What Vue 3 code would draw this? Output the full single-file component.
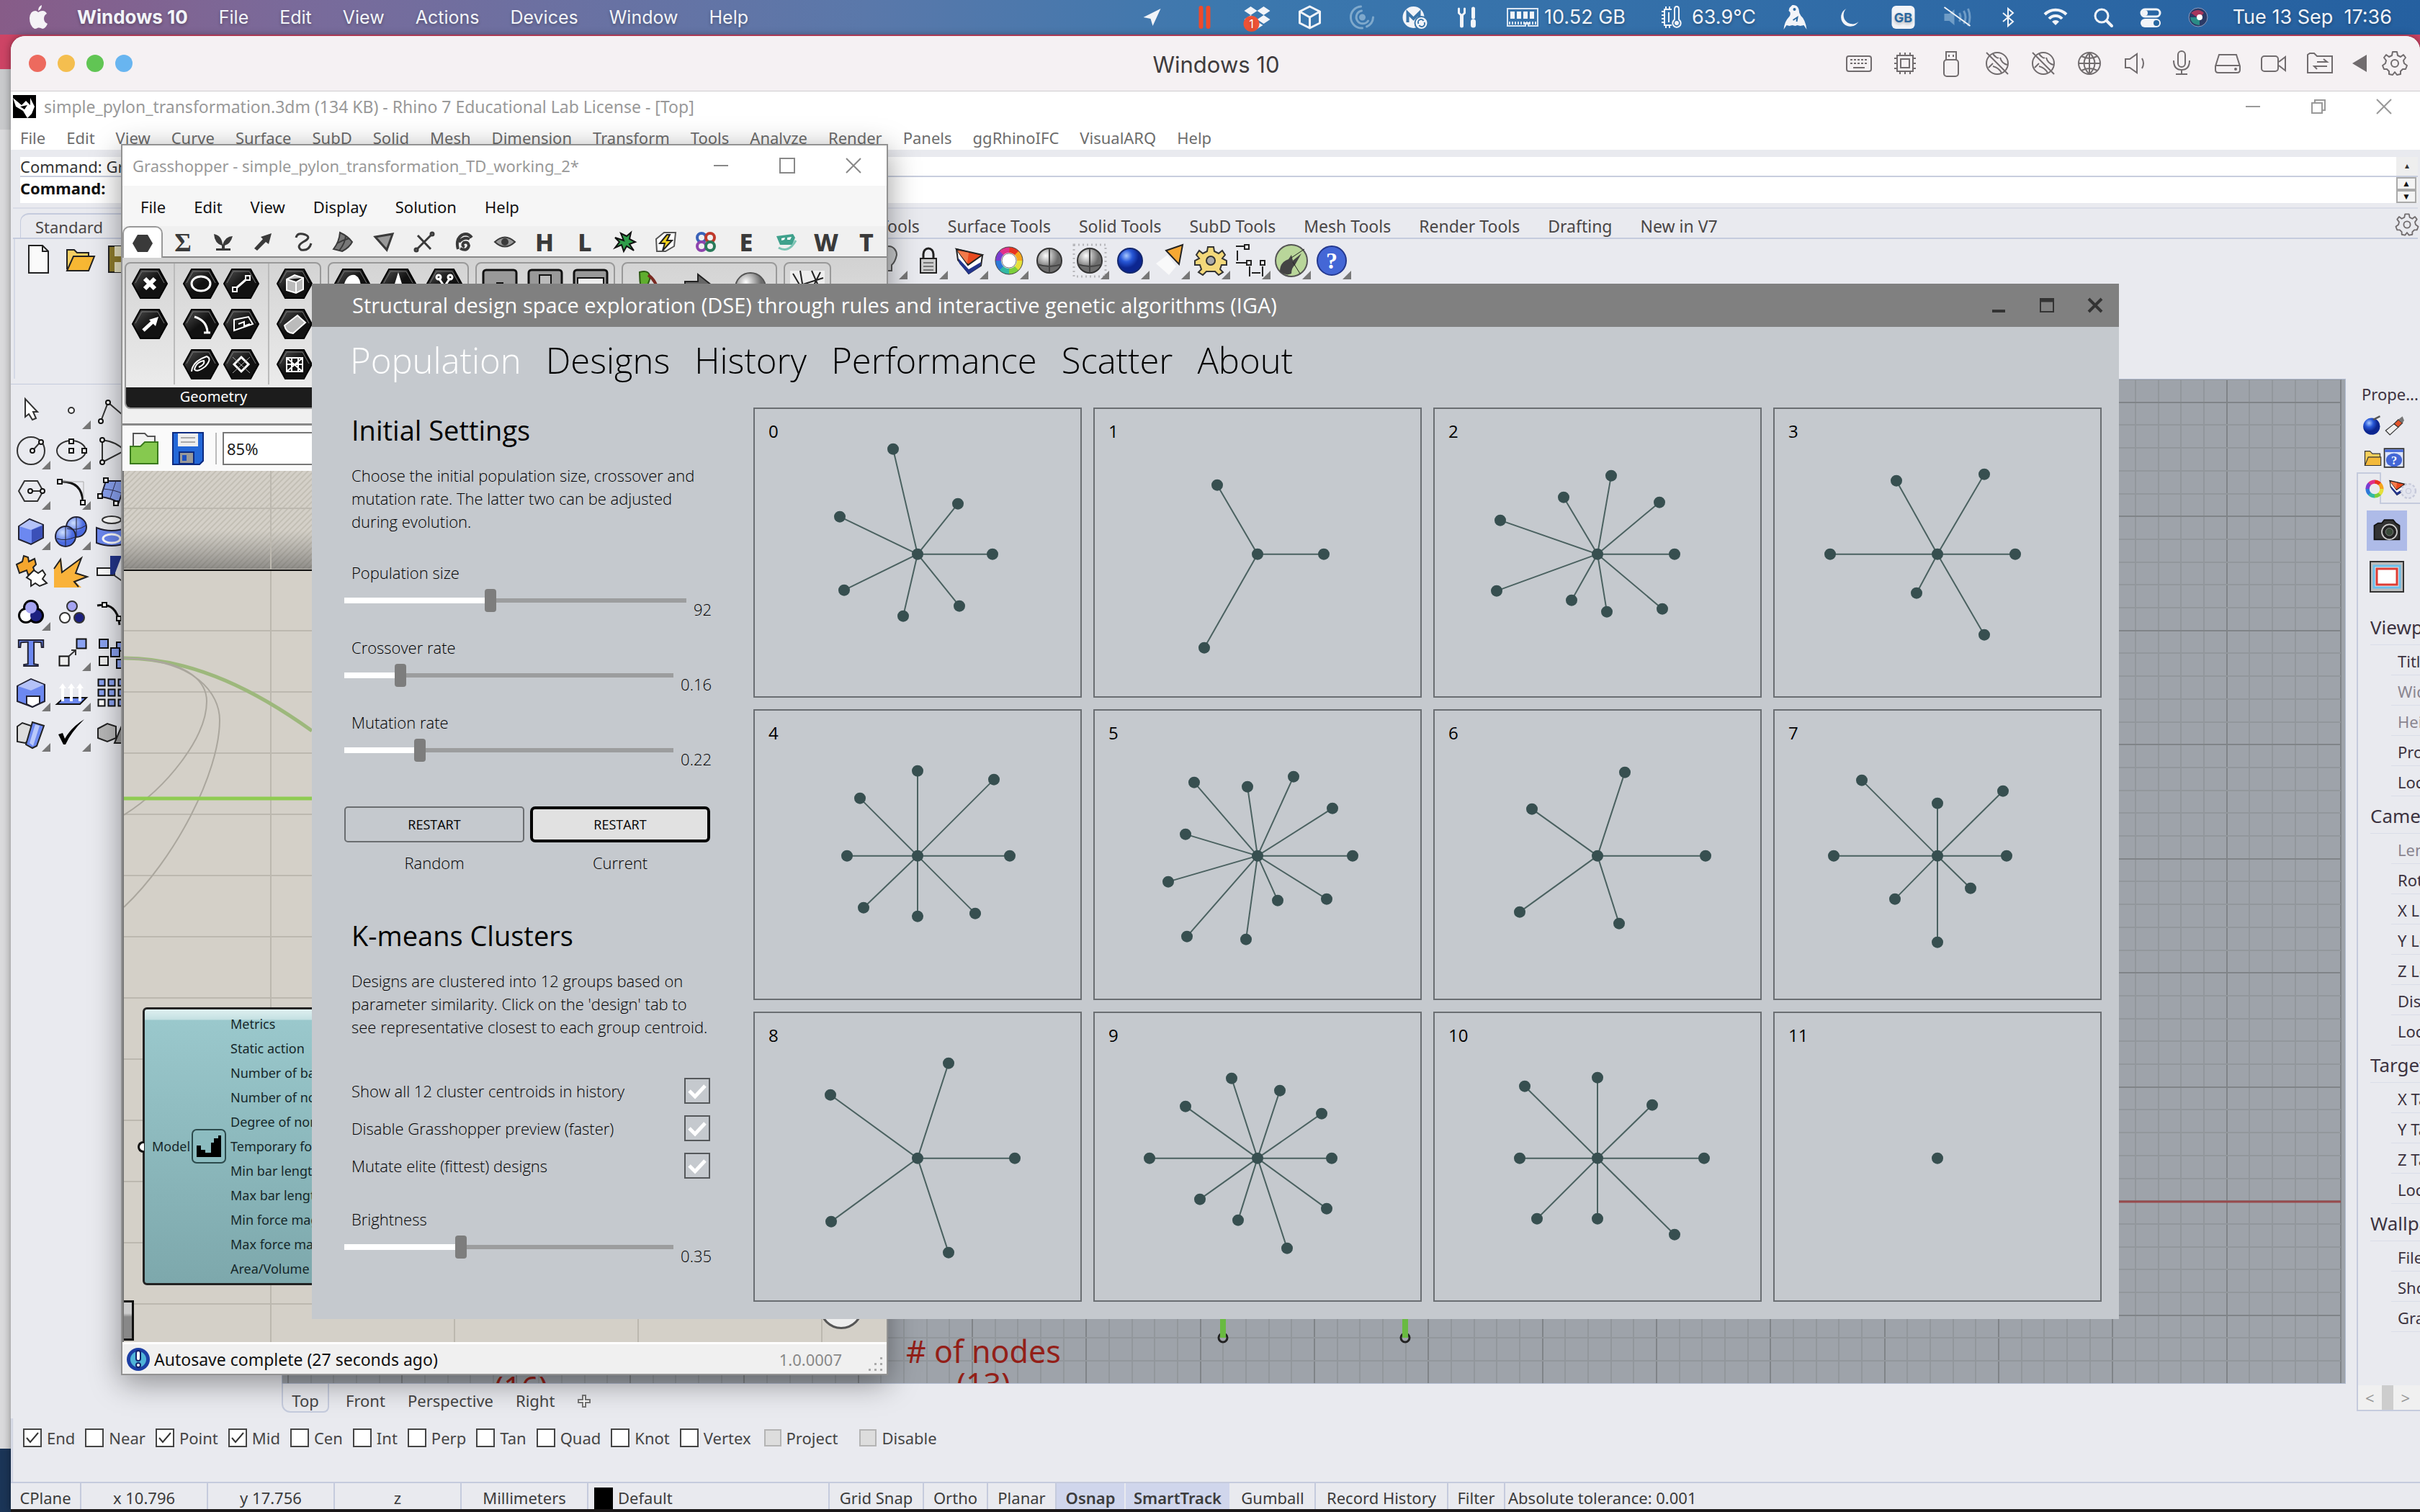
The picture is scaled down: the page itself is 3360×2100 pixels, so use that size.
<script setup>
import { ref } from 'vue'

const macMenus = ['File', 'Edit', 'View', 'Actions', 'Devices', 'Window', 'Help']
const W = '#f2f4f8'
const trayLeft = [
  `<path fill="${W}" d="M12-12L1 12L-2 2L-12 0Z"/>`,
  `<path stroke="#f04a2a" stroke-width="6" stroke-linecap="round" d="M-5-13V13M5-13V13"/>`,
  `<path fill="${W}" d="M-9-15L0-9L-9-3L-18-9ZM9-15L18-9L9-3L0-9ZM-9-3L0 3L-9 9L-18 3ZM9-3L18 3L9 9L0 3ZM0 6L8 11L0 16Z"/><circle cx="-8" cy="9" r="11" fill="#ee5236"/><text x="-8" y="15" text-anchor="middle" font-size="16" font-family="Inter,sans-serif" fill="#fff">1</text>`,
  `<path fill="none" stroke="${W}" stroke-width="3" stroke-linejoin="round" d="M0-15L14-8V8L0 15L-14 8V-8ZM-14-8L0 0L14-8M0 0V15"/>`,
  `<g fill="none" stroke="#7fa9cc" stroke-width="3" stroke-linecap="round"><path d="M-2-15A15 15 0 1 0 0 15"/><path d="M-1-9A9 9 0 1 0 8 5"/><path d="M15 0A15 15 0 0 1 6 13"/><circle r="3" fill="#7fa9cc"/></g>`,
  `<circle cx="-2" cy="0" r="15" fill="${W}"/><path fill="none" stroke="#3a74a8" stroke-width="4" d="M-10 7V-6L-2 2L6-6V4"/><circle cx="9" cy="8" r="9" fill="${W}" stroke="#3a74a8" stroke-width="2"/><path fill="none" stroke="#3a74a8" stroke-width="2" d="M5 9a4 4 0 0 1 7-4M13 7a4 4 0 0 1-7 4"/>`,
  `<g fill="none" stroke="${W}" stroke-width="5" stroke-linecap="round"><path d="M-8-2V12M8-12V0"/><path stroke-width="7" d="M8 6V11"/><path stroke-width="3" d="M-12-12V-6L-8-2L-4-6V-12"/></g>`
]
const trayA = [
  `<path fill="${W}" d="M-4-17Q3-18 5-11Q5-6 8-2Q14 3 16 17L12 11L7 12L3 11L0 12L-4 11L-8 12L-12 11L-16 17Q-15 6-9 0Q-6-3-7-7L-9-9L-8-13Z"/><circle cx="-1" cy="-11" r="2" fill="#2b6aa2"/><path stroke="#2b6aa2" stroke-width="2" fill="none" d="M-3 4L3 0L2 6M-4 14V16M4 14V16"/>`,
  `<path fill="${W}" d="M-4-12A13 13 0 1 0 13 6A12 12 0 0 1-4-12Z"/>`,
  `<rect x="-16" y="-16" width="32" height="32" rx="6" fill="${W}"/><text y="7" text-anchor="middle" font-size="18" font-weight="700" font-family="Inter,sans-serif" fill="#2b68a0">GB</text>`,
  `<g fill="#6f9cc6"><path d="M-18-5H-11L-4-11V11L-11 5H-18Z"/><path fill="none" stroke="#6f9cc6" stroke-width="3" d="M3-6Q6 0 3 6M9-9Q14 0 9 9M15-12Q20 0 15 12"/></g><path stroke="${W}" stroke-width="2" d="M-18-14L18 12"/>`
]
const trayB = [
  `<path fill="none" stroke="${W}" stroke-width="2" d="M-7-6L7 6L0 12V-12L7-6L-7 6"/>`,
  `<g fill="none" stroke="${W}" stroke-width="4"><path d="M-15-4A21 21 0 0 1 15-4"/><path d="M-9 2A12 12 0 0 1 9 2"/></g><path fill="${W}" d="M-5 6A7 7 0 0 1 5 6L0 11Z"/>`,
  `<circle cx="-2" cy="-2" r="9" fill="none" stroke="${W}" stroke-width="3"/><path stroke="${W}" stroke-width="4" stroke-linecap="round" d="M5 5L12 12"/>`,
  `<rect x="-13" y="-11" width="26" height="10" rx="5" fill="none" stroke="${W}" stroke-width="3"/><circle cx="-8" cy="-6" r="4" fill="${W}"/><rect x="-14" y="2" width="28" height="12" rx="6" fill="${W}"/><circle cx="8" cy="8" r="4" fill="#2766a0"/>`,
  `<circle r="13" fill="#2a3a66" stroke="#8d9cc0" stroke-width="1"/><path fill="#a8375c" d="M-10-6Q0-14 8-6L1 2Z"/><path fill="#2a8c86" d="M-11 0Q-10 10 2 11L2 0Z"/><circle cx="2" cy="0" r="4" fill="#fff"/>`
]
const G = 'fill="none" stroke="#716c6e" stroke-width="2"'
const vmIcons = [
  `<g ${G}><rect x="-17" y="-10" width="34" height="21" rx="3"/><path stroke-dasharray="3 2" d="M-12-5H13M-12 0H13"/><path d="M-8 6H8"/></g>`,
  `<g ${G}><rect x="-11" y="-11" width="22" height="22"/><rect x="-6" y="-6" width="12" height="12"/><path d="M-7-15V-11M0-15V-11M7-15V-11M-7 15V11M0 15V11M7 15V11M-15-7H-11M-15 0H-11M-15 7H-11M15-7H11M15 0H11M15 7H11"/></g>`,
  `<g ${G}><rect x="-10" y="-5" width="20" height="23" rx="4"/><path d="M-7-5V-16H7V-5M-3-12V-9M3-12V-9"/></g>`,
  `<g ${G}><circle r="15"/><path d="M-15-15L15 15M-6-13Q0-6 2-8M6 13Q2 6-6 4M14 2Q6 0 4-8M-12 6L-6 0"/></g>`,
  `<g ${G}><circle r="15"/><path d="M-15-15L15 15M-6-13Q0-6 2-8M6 13Q2 6-6 4M14 2Q6 0 4-8M-12 6L-6 0"/></g>`,
  `<g ${G}><circle r="15"/><path d="M0-15V15M-15 0H15M-11-10Q0-4 11-10M-11 10Q0 4 11 10M0-15Q-15 0 0 15M0-15Q15 0 0 15"/></g>`,
  `<g ${G}><path d="M-14-6H-8L2-13V13L-8 6H-14ZM9-7Q13 0 9 7"/></g>`,
  `<g ${G}><rect x="-5" y="-17" width="10" height="22" rx="5"/><path d="M-11-4Q-11 9 0 9T11-4M0 9V15M-8 15H8"/></g>`,
  `<g ${G}><path d="M-12-12H12L17 4V9Q17 13 13 13H-13Q-17 13-17 9V4ZM-17 3H17"/><circle cx="11" cy="8" r="1"/></g>`,
  `<g ${G}><rect x="-17" y="-10" width="23" height="21" rx="4"/><path d="M7-2L16-9V10L7 3"/></g>`,
  `<g ${G}><path d="M-17-12L-14-14H-8L-4-10H17V13H-17ZM-4-2H10L5-6M10 4H-8L-4 8"/></g>`
]
const gear = `<path fill="none" stroke="#716c6e" stroke-width="2" stroke-linejoin="round" d="M-3-16H3L4-11L8-9L12-12L15-8L12-4L13 0L17 3L15 8L11 8L8 11V15L3 16L0 12L-3 16L-8 15V11L-11 8L-15 8L-17 3L-13 0L-12-4L-15-8L-12-12L-8-9L-4-11Z"/><circle r="5" fill="none" stroke="#716c6e" stroke-width="2"/>`

const rhinoMenus = ['File', 'Edit', 'View', 'Curve', 'Surface', 'SubD', 'Solid', 'Mesh', 'Dimension', 'Transform', 'Tools', 'Analyze', 'Render', 'Panels', 'ggRhinoIFC', 'VisualARQ', 'Help']
const toolTabs = ['Curve Tools', 'Surface Tools', 'Solid Tools', 'SubD Tools', 'Mesh Tools', 'Render Tools', 'Drafting', 'New in V7']

const fileIcons = [
  `<path fill="#fafafa" stroke="#222" stroke-width="2" d="M-13-19H6L14-11V19H-13Z"/><path fill="none" stroke="#222" stroke-width="2" d="M6-19V-11H14"/>`,
  `<path fill="#f6cf63" stroke="#222" stroke-width="2" d="M-18 14V-13H-8L-4-9H12V-3"/><path fill="#f7b733" stroke="#222" stroke-width="2" d="M-18 16L-9-4H20L12 16Z"/>`,
  `<path fill="#8f7d2c" stroke="#222" stroke-width="2" d="M-18-18H18V18H-18Z"/><path fill="#e9e4c4" d="M-10-18H10V-4H-10ZM-10 4H12V18H-10Z"/>`
]
const ring = (r, w) => ['#e8331f', '#f4a51c', '#e5e03a', '#7ccf3c', '#32b8a4', '#2c78d8', '#7a3cd0', '#e0308a'].map((c, i) => {
  const a = (i * 45 - 90) * Math.PI / 180, b = (i * 45 - 43) * Math.PI / 180
  return `<path fill="none" stroke="${c}" stroke-width="${w}" d="M${(r * Math.cos(a)).toFixed(1)} ${(r * Math.sin(a)).toFixed(1)}A${r} ${r} 0 0 1 ${(r * Math.cos(b)).toFixed(1)} ${(r * Math.sin(b)).toFixed(1)}"/>`
}).join('')
const sphere = `<circle r="17" fill="url(#gSphere)" stroke="#333" stroke-width="2"/><path fill="none" stroke="#444" stroke-width="2" d="M0-17V17M-17 5Q0 11 17 5"/>`
const toolIcons = [
  `<path fill="#c9cacc" stroke="#555" stroke-width="2" d="M-10-8A11 12 0 0 1 12-8Q10 2 5 6V14H-4V6Z"/>`,
  `<path fill="none" stroke="#222" stroke-width="3" d="M-7-2V-9A7 8 0 0 1 7-9V-2"/><rect x="-11" y="-3" width="22" height="20" fill="#ccc" stroke="#222" stroke-width="2"/><path stroke="#777" stroke-width="2" d="M-7 3H7M-7 8H7M-7 13H7"/>`,
  `<path fill="#fff" stroke="#222" stroke-width="2" d="M-17-16L-15-1L0 18L17 7L19-7Z"/><path fill="#23358c" d="M-15-4L0 12L17 2L16 8L0 19L-13 4Z"/><path fill="#e8491f" stroke="#222" stroke-width="2" d="M-17-16L19-8L-1 6Z"/><path fill="#f27a4a" d="M-16-14L0-11L-2 4Z"/>`,
  `${ring(15, 8)}<circle r="19" fill="none" stroke="#444" stroke-width="1"/><circle r="10" fill="#fff" stroke="#777" stroke-width="1"/>`,
  sphere,
  `<rect x="-22" y="-22" width="44" height="44" fill="none" stroke="#b8b8bc" stroke-width="3" stroke-dasharray="2 4"/>${sphere}`,
  `<circle r="17" fill="url(#gBlue)" stroke="#14286e" stroke-width="2"/>`,
  `<path fill="#f6a834" stroke="#222" stroke-width="2" d="M-6-14L17-22L12 5Z"/><path fill="#fff" opacity="0.7" d="M-20 4L-4-8L8 8L-2 20Z"/>`,
  `<g fill="#f3d87a" stroke="#333" stroke-width="2"><path d="M-4-19H4L5-13L11-10L16-14L20-8L16-3L22 0V6L15 6L13 12L17 16L11 20L6 15H-6L-11 20L-17 16L-13 12L-15 6H-22V0L-16-3L-20-8L-16-14L-11-10L-5-13Z"/><circle r="6" fill="#aaa"/></g>`,
  `<g fill="none" stroke="#222" stroke-width="2"><path d="M-21-20H-10M-19-14V0M-21 3H-7M-2 8V22M16 8V22M1 17H13"/><path fill="#fff" d="M-9-22H-3V-16H-9ZM-6 0H0V6H-6ZM13 0H19V6H13Z"/></g>`,
  `<circle r="22" fill="#b9d69a" stroke="#555" stroke-width="2"/><path fill="#444" d="M-16 15Q-16 2-4-2L0-8L2 0L14-10L5 6Q0 10 0 18Q-8 22-16 15Z"/><path stroke="#222" fill="none" d="M0-4L18-16M2 2L12 18"/>`,
  `<circle r="20" fill="#4467d6" stroke="#24388e" stroke-width="2"/><text y="11" text-anchor="middle" font-family="Liberation Serif,serif" font-size="32" font-weight="700" fill="#fff">?</text>`
]
const B = '#6c88f0'
const sq = (x, y, c = '#fff', s = 6) => `<rect x="${x - s / 2}" y="${y - s / 2}" width="${s}" height="${s}" fill="${c}" stroke="#111" stroke-width="2"/>`
const S1 = 'fill="none" stroke="#333" stroke-width="2"'
const palette = [
  { c: 0, g: `<path fill="#fff" stroke="#333" stroke-width="2" d="M-8-16V9L-3 5L2 13L7 11L3 2H9Z"/>` },
  { c: 1, g: `<circle r="4" fill="#fff" stroke="#333" stroke-width="2"/>` },
  { c: 0, g: `<path ${S1} d="M-15 15L-5-11L15 6"/><circle cx="-15" cy="15" r="3" fill="#fff" stroke="#111" stroke-width="2"/><circle cx="-5" cy="-11" r="3" fill="#fff" stroke="#111" stroke-width="2"/>` },
  { c: 1, g: `<circle r="19" ${S1}/><path ${S1} d="M2 0L13-12"/><circle cx="2" cy="0" r="3" fill="#fff" stroke="#111" stroke-width="2"/><circle cx="14" cy="-12" r="3" fill="#fff" stroke="#111" stroke-width="2"/>` },
  { c: 1, g: `<ellipse rx="20" ry="14" ${S1}/>${sq(0, -13)}${sq(0, 0)}${sq(18, 0)}` },
  { c: 0, g: `<path ${S1} d="M-13-15Q8-12 18 0L-13 16Z"/><circle cx="-13" cy="-15" r="3" fill="#fff" stroke="#111" stroke-width="2"/><circle cx="-13" cy="16" r="3" fill="#fff" stroke="#111" stroke-width="2"/>` },
  { c: 1, g: `<path ${S1} d="M-17 0L-9-14H9L17 0L9 14H-9Z"/><path ${S1} d="M-1 0H15"/><circle cx="-1" r="3" fill="#fff" stroke="#111" stroke-width="2"/><circle cx="16" r="3" fill="#fff" stroke="#111" stroke-width="2"/>` },
  { c: 1, g: `<path fill="none" stroke="#111" stroke-width="3" d="M-15-13Q15-14 16 15"/><path stroke="#aaa" fill="none" d="M-12-13H17V12"/>${sq(-16, -13)}${sq(16, 16)}` },
  { c: 0, g: `<path fill="#8aa2f2" stroke="#223" stroke-width="2" d="M-8-14H20L10 16Q0 10-15 8Z"/><path stroke="#335" fill="none" d="M-12-3Q4-2 16 4M6-14L-2 10"/>${sq(-8, -15)}${sq(-16, 7)}${sq(6, 17)}` },
  { c: 1, g: `<path fill="${B}" stroke="#223" stroke-width="2" d="M-17-7L-2 -17L17-9V9L0 18L-17 11Z"/><path fill="#b4c2f8" d="M-16-7L-2-16L16-9L0-2Z"/><path fill="#3b50b8" d="M1-2L16-8V8L1 16Z"/>` },
  { c: 1, g: `<circle cx="7" cy="-6" r="14" fill="url(#gLight)" stroke="#223" stroke-width="2"/><circle cx="-8" cy="7" r="14" fill="url(#gLight)" stroke="#223" stroke-width="2"/><path fill="none" stroke="#223" d="M-20 10Q-8 14 5 8M-8-7V20M7-20V7M-6-4Q8 0 20-8"/>` },
  { c: 0, g: `<ellipse cy="-16" rx="13" ry="5" fill="#fff" stroke="#333" stroke-width="2"/><path fill="${B}" stroke="#223" stroke-width="2" d="M-21-5Q0 3 21-5V16Q0 24-21 16Z"/><ellipse cy="10" rx="12" ry="6" fill="${B}" stroke="#fff" stroke-width="3"/>` },
  { c: 0, g: `<path fill="#f5a62e" stroke="#222" stroke-width="2" d="M-20-10L-12-14L-10-22L-4-20L-3-14L5-18L7-10L3-6L6 2L-4 4L-6-2L-16 2L-18-4Z"/><path fill="#fff" stroke="#222" stroke-width="2" d="M-2 4L4-2L10 2L16-2L20 4L16 10L22 16L12 20L6 16L0 20L0 12L-6 8Z"/>` },
  { c: 0, g: `<path fill="#f9b23a" d="M-24 22V-4L-14-18L-12 0L14-20L6 2L22 6L6 14L14 22Z"/><path fill="none" stroke="#222" stroke-width="2" d="M-24-4L-15-17L-13 1L14-19L6 2L22 7L4 14L10 21"/>` },
  { c: 0, g: `<path fill="#fff" stroke="#222" stroke-width="2" d="M-20-5H4V5H-20Z"/><path fill="#23358c" d="M-2-22H14L4 4H-2Z"/><path ${S1} d="M2 4L16 14"/>` },
  { c: 1, g: `<g stroke="#000" stroke-width="6"><circle cx="0" cy="-6" r="8"/><circle cx="-7" cy="5" r="8"/><circle cx="7" cy="5" r="8"/></g><circle cx="-7" cy="5" r="8" fill="#fff"/><circle cx="7" cy="5" r="8" fill="#1c2080"/><circle cx="0" cy="-6" r="8" fill="#a5a4f2"/>` },
  { c: 0, g: `<g stroke="#333" stroke-width="2"><circle cx="1" cy="-8" r="7" fill="#a5a4f2"/><circle cx="-9" cy="8" r="7" fill="#fff"/><circle cx="11" cy="8" r="7" fill="#1c2080"/></g>` },
  { c: 0, g: `<path fill="none" stroke="#111" stroke-width="3" d="M-20-9Q8-14 11 18"/>${sq(-10, -10)}${sq(10, 9)}` },
  { c: 0, g: `<text y="19" text-anchor="middle" font-family="Liberation Serif,serif" font-weight="700" font-size="54" fill="${B}" stroke="#223" stroke-width="2">T</text>` },
  { c: 1, g: `${sq(-10, 12, '#eee', 13)}${sq(14, -12, '#8aa2f2', 13)}<path ${S1} d="M-4 6L6-3M0-3H6V4"/>` },
  { c: 0, g: `${sq(-11, -12, '#8aa2f2', 12)}${sq(-11, 12, '#eee', 12)}${sq(13, -8, '#8aa2f2', 12)}${sq(5, 0, '#8aa2f2', 12)}${sq(13, 16, '#8aa2f2', 12)}` },
  { c: 1, g: `<path fill="${B}" stroke="#223" stroke-width="2" d="M-19-9L0-19L19-11V12L2 20L-19 12Z"/><path fill="#b4c2f8" d="M-18-9L0-18L18-11L0-3Z"/><path fill="#fff" stroke="#223" stroke-width="2" d="M-6 5H12V15L2 20L-6 16Z"/>` },
  { c: 1, g: `<path fill="${B}" stroke="#111" stroke-width="2" d="M-20 16L-10 7H21L12 16Z"/><path fill="none" stroke="#fff" stroke-width="4" d="M-12 12V-8M0 12V-8M12 12V-8"/><path fill="#fff" d="M-17-6L-12-13L-7-6ZM-5-6L0-13L5-6ZM7-6L12-13L17-6Z"/>` },
  { c: 0, g: [-14, 0, 14].map(y => [-14, 0, 14].map(x => sq(x, y, x === -14 && y === 14 ? '#fff' : '#8aa2f2', 9)).join('')).join('') },
  { c: 1, g: `<path fill="#ddd" stroke="#222" stroke-width="2" d="M-19-9L-12-14L0-10V8L-8 14L-19 12Z"/><path fill="${B}" stroke="#222" stroke-width="2" d="M-7 16L2-15L18-10L8 18L2 21Z"/><path fill="#b9c8fa" d="M-2 14L6-12L12-10L3 18Z"/>` },
  { c: 1, g: `<path fill="#000" d="M-18 2L-12 0L-9 8Q0-8 18-19Q0-2-8 16H-11Z"/>` },
  { c: 0, g: `<path fill="#b8b8b8" stroke="#222" stroke-width="2" d="M-19-6L-6-13L6-9V7L-6 12L-19 7Z"/><path fill="#999" stroke="#222" stroke-width="2" d="M4 14L14-10L24 14Z"/>` }
]

const ghMenus = ['File', 'Edit', 'View', 'Display', 'Solution', 'Help']
const K = '#3a3a3a'
const ltr = (t, s = 34, f = 'Noto Sans') => `<text y="13" text-anchor="middle" font-family="${f},sans-serif" font-weight="800" font-size="${s}" fill="${K}">${t}</text>`
const ghTabs = [
  `<path fill="${K}" d="M-7-12H7L14 0L7 12H-7L-14 0Z"/>`,
  ltr('Σ', 36, 'Liberation Serif'),
  `<path fill="${K}" d="M-13-11Q-2-9-1 4Q3-8 13-8Q10 3 2 5V9H10V12H-10V9H-2V5Q-12 2-13-11Z"/>`,
  `<path fill="${K}" d="M12-12L8 3L4 0L-8 12L-12 9L0-4L-3-7Z"/>`,
  `<path fill="none" stroke="${K}" stroke-width="3" d="M-10-6Q-8-14 3-10Q12-6 0 0Q-10 6-3 11Q8 13 11 2"/>`,
  `<path fill="#777" stroke="${K}" stroke-width="2" d="M-5-13Q6-8 12 0Q8 8-2 13L-14 10Q-6 0-5-13ZM-9 2Q0-3 8-5M3-8Q2 2-6 12"/>`,
  `<path fill="#999" stroke="${K}" stroke-width="3" d="M-12-7L12-11L4 11Z"/>`,
  `<g fill="#fff" stroke="${K}" stroke-width="3"><path d="M-11 11L11-11M-9-9L9 10"/><circle cx="11" cy="-11" r="2"/><circle cx="-11" cy="11" r="2"/></g>`,
  `<path fill="none" stroke="${K}" stroke-width="4" d="M-9 10Q-13-4-3-10Q5-13 10-6M-8 0Q0-8 7-4M-6 9Q4 14 6 5Q5-1-1 1Q-5 5 0 7"/>`,
  `<path fill="#999" stroke="${K}" stroke-width="2" d="M-14 0Q0-13 14 0Q0 13-14 0Z"/><circle r="5" fill="${K}"/>`,
  ltr('H'), ltr('L'),
  `<path fill="#2f9e4a" stroke="#111" stroke-width="2" d="M-2-2L-6-12L2-8L8-13L6-4L14 0L6 3L12 12L2 6L-2 13L-5 4L-14 8L-8 0L-14-6Z"/>`,
  `<path fill="#fff" stroke="#555" stroke-width="2" d="M-13-4L-2-13H14L12 6L0 13H-12Z"/><path fill="#f6d21c" stroke="#222" stroke-width="2" d="M2-10L-8 2H-1L-4 12L9-2H2L6-10Z"/>`,
  `<g fill="none" stroke-width="4"><circle cx="-6" cy="-6" r="6" stroke="#3a62b8"/><circle cx="6" cy="-6" r="6" stroke="#c0392b"/><circle cx="-6" cy="6" r="6" stroke="#8e44ad"/><circle cx="6" cy="6" r="6" stroke="#2a7a5a"/></g>`,
  ltr('E'),
  `<path fill="#3fa18c" d="M-13-8L10-11L13-6L9 4H-8Z"/><path fill="#fff" d="M-6-5L-1-6L-2-3L-6-2ZM2-6L8-7L6-3L2-3Z"/><path fill="none" stroke="#7cc4b4" stroke-width="3" d="M-10 8Q4 16 14-2"/>`,
  ltr('W'), ltr('T')
]
const hex = g => `<path fill="url(#gHex)" stroke="#000" stroke-width="2" d="M-13-20H13L24 0L13 20H-13L-24 0Z"/><path fill="none" stroke="#777" d="M-20-1L-11-17H11L20-1"/>${g}`
const L = 'fill="none" stroke="#fff" stroke-width="3"'
const L2 = 'fill="none" stroke="#fff" stroke-width="2"'
const H = {
  x: hex(`<path stroke="#fff" stroke-width="6" d="M-7-7L7 7M7-7L-7 7"/>`),
  arrow: hex(`<path stroke="#fff" stroke-width="5" d="M-9 9L5-4"/><path fill="#fff" d="M12-10L8 3L-1-6Z"/>`),
  o: hex(`<ellipse rx="13" ry="10" ${L}/>`),
  arc: hex(`<path ${L} d="M-9-10Q8-5 9 11M4 12H13"/>`),
  spiral: hex(`<path ${L2} d="M-13 10Q-12-4 8-11Q16-8 6 3Q-6 12-9 7Q-7-3 4-5Q6 0-3 4"/>`),
  line: hex(`<path ${L} d="M-8 7L8-7"/><path fill="#111" stroke="#fff" stroke-width="2" d="M-12 5H-6V11H-12ZM6-11H12V-5H6Z"/>`),
  plane: hex(`<path ${L2} d="M-10-6L10-10L16 0L-10 9ZM-4 0L4-3V3L12 0"/>`),
  dia: hex(`<path ${L} d="M0-10L10 0L0 10L-10 0Z"/><path stroke="#aaa" d="M-12-10L12 12M12-10L-12 12"/>`),
  cube: hex(`<path fill="#bbb" stroke="#fff" stroke-width="2" d="M-11-6L0-12L12-8V8L2 13L-11 9ZM-11-6L2-2L12-8M2-2V13"/>`),
  cyl: hex(`<path fill="#bbb" stroke="#fff" stroke-width="2" d="M-14 2L4-12L15-2L-2 13Q-12 12-14 2Z"/>`),
  mesh: hex(`<path ${L2} d="M-11-9H11V10H-11ZM-11 0H11M-4-9V10M5-9V10M-11-9L11 10M11-9L-11 10"/>`),
  dome: hex(`<path fill="#fff" d="M-12 4Q-8-14 4-12Q12-8 12 6Z"/>`),
  a: hex(`<path fill="#fff" d="M0-16L8 10H-8Z"/>`),
  br: hex(`<path ${L} d="M-8-8L0 4L8-8M0 4V14"/><circle cx="-8" cy="-9" r="3" ${L}/><circle cx="8" cy="-9" r="3" ${L}/>`),
  e: ''
}
const geoCols = [[['x'], ['arrow'], ['e']], [['o', 'line'], ['arc', 'plane'], ['spiral', 'dia']], [['cube'], ['cyl'], ['mesh']]]
const btn = g => `<rect x="-23" y="-19" width="46" height="46" rx="4" fill="#999" stroke="#111" stroke-width="3"/>${g}`
const ghGroups = [
  { w: 196, icons: [H.dome, H.a, H.br] },
  { w: 194, icons: [btn('<path fill="#111" d="M-5-2H5V10H-5Z"/>'), btn('<path fill="#bbb" stroke="#111" stroke-width="2" d="M-8-12H8V20H-8Z"/>'), btn('<path fill="#eee" stroke="#111" stroke-width="2" d="M-18-8H18V2H-18ZM-18 6H18V14H-18Z"/>')] },
  { w: 216, icons: ['<path fill="#5fae2e" stroke="#2c5a12" stroke-width="2" d="M-12-16Q4-20 2-6Q-2 8-10 8Q-12-4-12-16Z"/><path fill="none" stroke="#7a2a22" stroke-width="4" d="M0-12Q12-4 14 14"/>', '<path fill="#666" stroke="#222" stroke-width="2" d="M-20-3H-2V-13L22 6L0 24V14H-20Z"/>', '<circle cy="6" r="21" fill="url(#gSphere)" stroke="#555" stroke-width="2"/><circle cx="12" cy="8" r="8" fill="#c2306a"/>'] },
  { w: 66, icons: ['<rect x="-24" y="-18" width="48" height="40" fill="#eee"/><path stroke="#222" stroke-width="2" fill="none" d="M-20-14L0 20L18-16M-22 6L22-8M-10-18L-4 18M6-18L20 14"/>'] }
]
const metrics = ['Metrics', 'Static action', 'Number of bars', 'Number of nodes', 'Degree of nonlinearity', 'Temporary force', 'Min bar length', 'Max bar length', 'Min force magnitude', 'Max force magnitude', 'Area/Volume']

const dseTabs = ['Population', 'Designs', 'History', 'Performance', 'Scatter', 'About']
const sliders = ref([
  { id: 'pop', label: 'Population size', value: 92, max: 216 },
  { id: 'cross', label: 'Crossover rate', value: 0.16, max: 1 },
  { id: 'mut', label: 'Mutation rate', value: 0.22, max: 1 }
])
const brightness = ref({ id: 'bri', label: 'Brightness', value: 0.35, max: 1 })
const checks = ref([
  { id: 'c1', label: 'Show all 12 cluster centroids in history', on: true },
  { id: 'c2', label: 'Disable Grasshopper preview (faster)', on: true },
  { id: 'c3', label: 'Mutate elite (fittest) designs', on: true }
])
const designs = [
  [[-34, -146], [56, -70], [104, 0], [58, 72], [-20, 86], [-102, 50], [-108, -52]],
  [[-56, -96], [92, 0], [-74, 130]],
  [[19, -109], [86, -72], [107, 0], [90, 76], [13, 80], [-36, 64], [-140, 51], [-135, -47], [-47, -79]],
  [[-57, -102], [65, -111], [108, 0], [65, 112], [-29, 54], [-149, 0]],
  [[0, -118], [106, -106], [128, 0], [80, 80], [0, 84], [-75, 72], [-98, 0], [-80, -80]],
  [[-88, -102], [-14, -96], [50, -110], [104, -66], [132, 0], [96, 60], [28, 62], [-16, 116], [-98, 112], [-124, 36], [-100, -30]],
  [[38, -116], [150, 0], [30, 94], [-108, 78], [-91, -65]],
  [[0, -73], [91, -90], [96, 0], [46, 45], [0, 120], [-59, 60], [-144, 0], [-105, -105]],
  [[43, -132], [135, 0], [43, 131], [-120, 88], [-121, -88]],
  [[-36, -111], [31, -94], [89, -62], [103, 0], [96, 70], [41, 125], [-27, 86], [-80, 57], [-150, 0], [-100, -72]],
  [[0, -112], [76, -74], [148, 0], [107, 106], [0, 84], [-84, 84], [-108, 0], [-101, -100]],
  []
]

const sections = [
  { t: 'Viewport', rows: ['Title', '-Width', '-Height', 'Projection', 'Locked'] },
  { t: 'Camera', rows: ['-Lens', 'Rotation', 'X Location', 'Y Location', 'Z Location', 'Distance', 'Location'] },
  { t: 'Target', rows: ['X Target', 'Y Target', 'Z Target', 'Location'] },
  { t: 'Wallpaper', rows: ['Filename', 'Show', 'Gray'] }
]
const vx = Array.from({ length: 91 }, (_, i) => ({ p: Math.round(8 + i * 31.667), m: i % 5 === 0 }))
const vy = Array.from({ length: 45 }, (_, i) => ({ p: Math.round(i * 31.7), m: i % 5 === 1 }))
const snaps = ref([
  ['End', 1], ['Near', 0], ['Point', 1], ['Mid', 1], ['Cen', 0], ['Int', 0], ['Perp', 0], ['Tan', 0], ['Quad', 0], ['Knot', 0], ['Vertex', 0]
].map(([t, on]) => ({ t, on: !!on })))
const status = [['CPlane', 98], ['x 10.796', 176], ['y 17.756', 176], ['z', 176], ['Millimeters', 176]]
const status2 = [['Grid Snap', 131], ['Ortho', 89], ['Planar', 95], ['Osnap', 96, 1], ['SmartTrack', 146, 1], ['Gumball', 118], ['Record History', 184], ['Filter', 79]]
</script>

<template>
  <div class="desktop">
    <svg class="defs" width="0" height="0" aria-hidden="true">
      <defs>
        <radialGradient id="gSphere" cx="35%" cy="30%"><stop offset="0" stop-color="#fff" /><stop offset="1" stop-color="#6c6c6c" /></radialGradient>
        <radialGradient id="gBlue" cx="35%" cy="30%"><stop offset="0" stop-color="#a8c8ff" /><stop offset="0.5" stop-color="#2858d8" /><stop offset="1" stop-color="#0c2690" /></radialGradient>
        <radialGradient id="gLight" cx="35%" cy="30%"><stop offset="0" stop-color="#cfe0ff" /><stop offset="1" stop-color="#4a6ae0" /></radialGradient>
        <linearGradient id="gHex" x1="0" y1="0" x2="1" y2="1"><stop offset="0" stop-color="#555" /><stop offset="0.5" stop-color="#111" /></linearGradient>
      </defs>
    </svg>

    <header class="macbar">
      <svg class="apple" viewBox="0 0 28 34"><path fill="#f4f2f6" d="M19 0Q19 6 14 8Q14 2 19 0ZM14 10Q17 8 20 8Q24 8 26 12Q22 14 22 19Q22 24 27 26Q24 33 20 33Q17 31 14 31.5Q11 33 9 33Q2 29 2 18Q3 8 10 8Q12 8 14 10Z" /></svg>
      <nav class="macmenu"><b>Windows 10</b><a v-for="m in macMenus" :key="m" href="#">{{ m }}</a></nav>
      <div class="tray">
        <div class="slots s73"><svg v-for="(g, i) in trayLeft" :key="i" viewBox="-24 -24 48 48" v-html="g" /></div>
        <div class="meter">
          <svg class="ram" viewBox="0 0 44 28"><path fill="none" stroke="#dbe6f2" stroke-width="2" d="M1 2H43V26H30V22H26V26H1Z" /><path fill="#f2f4f8" d="M5 6H11V16H5ZM14 6H20V16H14ZM23 6H29V16H23ZM32 6H38V16H32Z" /><path stroke="#dbe6f2" stroke-dasharray="2 2" stroke-width="4" d="M3 22H41" /></svg>
          <span>10.52 GB</span>
        </div>
        <div class="meter">
          <svg class="therm" viewBox="0 0 30 34"><path fill="none" stroke="#f2f4f8" stroke-width="2" d="M14 6H4V28H14M10 10V24M0 9H4M0 14H4M0 19H4M0 24H4M6 2V6M11 2V6M6 28V32M11 28V32" /><path fill="none" stroke="#f2f4f8" stroke-width="2" d="M18 20V6Q18 2 21 2T24 6V20Q28 24 26 28Q21 34 16 28Q14 24 18 20Z" /><circle cx="21" cy="25" r="3" fill="#f2f4f8" /></svg>
          <span>63.9°C</span>
        </div>
        <div class="slots s75"><svg v-for="(g, i) in trayA" :key="i" viewBox="-24 -24 48 48" v-html="g" /></div>
        <div class="slots s66"><svg v-for="(g, i) in trayB" :key="i" viewBox="-24 -24 48 48" v-html="g" /></div>
        <time>Tue 13 Sep&nbsp; 17:36</time>
      </div>
    </header>

    <main class="vm">
      <div class="vmbar">
        <div class="lights"><i class="r" /><i class="y" /><i class="g" /><i class="b" /></div>
        <h1>Windows 10</h1>
        <div class="vmtools">
          <svg v-for="(g, i) in vmIcons" :key="i" viewBox="-24 -24 48 48" v-html="g" />
          <svg class="tight" viewBox="-24 -24 48 48"><path fill="#716c6e" d="M-11 0L9-12V12Z" /></svg>
          <svg class="tight" viewBox="-24 -24 48 48" v-html="gear" />
        </div>
      </div>

      <div class="rtitle">
        <svg class="rlogo" viewBox="0 0 32 32"><rect width="32" height="32" /><path fill="#fff" d="M0 4L12 14L18 8L24 14V4L30 16L26 26L20 32L14 22L4 16Z" /><path d="M10 16L16 20L20 14Z" /></svg>
        <span class="grow">simple_pylon_transformation.3dm (134 KB) - Rhino 7 Educational Lab License - [Top]</span>
        <button aria-label="Minimize"><svg viewBox="-24 -24 48 48"><path stroke="#999" stroke-width="2" d="M-10 0H10" /></svg></button>
        <button aria-label="Restore"><svg viewBox="-24 -24 48 48"><path fill="none" stroke="#999" stroke-width="2" d="M-9-5H5V9H-9ZM-5-5V-9H9V5H5" /></svg></button>
        <button aria-label="Close"><svg viewBox="-24 -24 48 48"><path stroke="#999" stroke-width="2" d="M-10-10L10 10M10-10L-10 10" /></svg></button>
      </div>
      <nav class="rmenu"><a v-for="m in rhinoMenus" :key="m" href="#">{{ m }}</a></nav>

      <div class="cmd">
        <div class="cmdtext">
          <div class="hist">Command: Grasshopper</div>
          <label class="prompt"><b>Command:</b><input type="text" aria-label="Command"></label>
        </div>
        <div class="cmdscroll">
          <div class="mini"><span>▴</span></div>
          <button aria-label="Up">▲</button><button aria-label="Down">▼</button>
        </div>
      </div>

      <div class="rtabs">
        <div class="std">Standard</div>
        <nav class="tooltabs"><a v-for="t in toolTabs" :key="t" href="#">{{ t }}</a></nav>
        <svg class="cog" viewBox="-24 -24 48 48" v-html="gear" />
      </div>
      <div class="rtools">
        <div class="tb left"><svg v-for="(g, i) in fileIcons" :key="i" viewBox="-24 -24 48 48" v-html="g" /></div>
        <div class="tb main"><span v-for="(g, i) in toolIcons" :key="i" :class="{ cor: i !== 4 }"><svg viewBox="-24 -24 48 48" v-html="g" /></span></div>
      </div>

      <div class="work">
        <div class="mid">
          <div class="upper">
            <aside class="palette">
              <div class="pgrid"><span v-for="(p, i) in palette" :key="i" :class="{ cor: p.c }"><svg viewBox="-24 -24 48 48" v-html="p.g" /></span></div>
            </aside>
            <section class="viewport">
              <svg class="grid" width="100%" height="100%">
                <line v-for="l in vx" :key="'x' + l.p" :x1="l.p" :x2="l.p" y1="0" y2="100%" :class="{ m: l.m }" />
                <line v-for="l in vy" :key="'y' + l.p" :y1="l.p" :y2="l.p" x1="0" x2="2858" :class="{ m: l.m }" />
                <line y1="1142" y2="1142" x1="0" x2="2858" class="axis" />
                <g class="legs"><circle cx="1306" cy="1331" r="6" /><circle cx="1559" cy="1331" r="6" /><path d="M1306 1240V1331M1559 1240V1331" /></g>
                <text x="866" y="1366">#&nbsp;of nodes</text>
                <text x="936" y="1411">(13)</text>
                <text x="294" y="1416">(16)</text>
              </svg>
            </section>
          </div>
          <nav class="vtabs">
            <a class="on" href="#">Top</a><a href="#">Front</a><a href="#">Perspective</a><a href="#">Right</a>
            <svg viewBox="0 0 20 20"><path fill="#fff" stroke="#777" stroke-width="2" d="M8 2H12V8H18V12H12V18H8V12H2V8H8Z" /></svg>
          </nav>
        </div>
        <aside class="props">
          <h2>Prope...</h2>
          <div class="pi">
            <svg viewBox="-24 -24 48 48"><circle cx="-2" cy="2" r="20" fill="url(#gBlue)" /><path stroke="#555" stroke-width="4" d="M2-14L18-22" /></svg>
            <svg viewBox="-24 -24 48 48"><path fill="#eee" stroke="#333" stroke-width="2" d="M-20 12L0-4L10 4L-10 22Z" /><path fill="#e2542a" stroke="#333" stroke-width="2" d="M0-4L10-14L20-6L10 4Z" /><path fill="#777" d="M10-14L20-22L24-12L20-6Z" /></svg>
            <svg viewBox="-24 -24 48 48"><path fill="#f6d05c" stroke="#333" stroke-width="2" d="M-18 18V-16H-6L0-10H18V18Z" /><path fill="#f3b93a" stroke="#333" stroke-width="2" d="M-18 18L-10-2H20V18Z" /></svg>
            <svg viewBox="-24 -24 48 48"><path fill="#dde4fa" stroke="#333" stroke-width="3" d="M-23-22H23V22H-23Z" /><path fill="#4467d6" d="M-22-20H22V-14H-22Z" /><ellipse cy="5" rx="19" ry="16" fill="#4467d6" /><text y="15" text-anchor="middle" font-family="Liberation Serif,serif" font-size="28" font-weight="700" fill="#fff">?</text></svg>
          </div>
          <div class="ptabs">
            <span class="on"><svg viewBox="-24 -24 48 48" v-html="ring(17, 9)" /></span>
            <span><svg viewBox="-24 -24 48 48" v-html="toolIcons[2]" /></span>
            <svg class="pcog" viewBox="-24 -24 48 48"><circle r="17" fill="#e3e5ee" stroke="#c6c9da" stroke-width="4" stroke-dasharray="6 4" /><circle r="6" fill="none" stroke="#c6c9da" stroke-width="2" /></svg>
          </div>
          <div class="pbody">
            <button class="cam" aria-label="Camera"><svg viewBox="-24 -24 48 48"><path fill="#333" stroke="#111" stroke-width="2" d="M-20-8L-14-12H-8L-4-17H10L14-12L20-8V14H-20Z" /><circle cx="4" cy="2" r="12" fill="#222" stroke="#ccc" stroke-width="2" /><circle cx="4" cy="2" r="6" fill="#3a4a3a" stroke="#888" /></svg></button>
            <button class="frame" aria-label="Frame"><svg viewBox="0 0 48 44"><rect x="1" y="1" width="46" height="42" fill="#bcbcbc" stroke="#333" stroke-width="2" /><rect x="6" y="7" width="36" height="30" fill="#e8e8e8" stroke="#6cc0ec" stroke-width="3" /><rect x="10" y="11" width="28" height="22" fill="#fff" stroke="#dd3c34" stroke-width="3" /></svg></button>
            <div v-for="s in sections" :key="s.t" class="sec">
              <h3>{{ s.t }}</h3>
              <p v-for="(r, i) in s.rows" :key="i" :class="{ dim: r[0] === '-' }">{{ r.replace('-', '') }}</p>
            </div>
            <div class="hscroll"><span>&lt;</span><i /><span>&gt;</span></div>
          </div>
        </aside>
      </div>

      <div class="snaps">
        <label v-for="s in snaps" :key="s.t"><input v-model="s.on" type="checkbox"><span>{{ s.t }}</span></label>
        <label class="off"><input type="checkbox" disabled><span>Project</span></label>
        <label class="off"><input type="checkbox" disabled><span>Disable</span></label>
      </div>
      <footer class="status">
        <span v-for="s in status" :key="s[0]" :style="{ width: s[1] + 'px' }">{{ s[0] }}</span>
        <span class="layer"><i />Default</span>
        <span v-for="s in status2" :key="s[0]" :class="{ act: s[2] }" :style="{ width: s[1] + 'px' }">{{ s[0] }}</span>
        <span class="tol">Absolute tolerance: 0.001</span>
      </footer>
    </main>

    <section class="gh">
      <div class="ghtitle">
        <span class="grow">Grasshopper - simple_pylon_transformation_TD_working_2*</span>
        <button aria-label="Minimize"><svg viewBox="-24 -24 48 48"><path stroke="#888" stroke-width="2" d="M-10 0H10" /></svg></button>
        <button aria-label="Maximize"><svg viewBox="-24 -24 48 48"><path fill="none" stroke="#888" stroke-width="2" d="M-10-10H10V10H-10Z" /></svg></button>
        <button aria-label="Close"><svg viewBox="-24 -24 48 48"><path stroke="#888" stroke-width="2" d="M-10-10L10 10M10-10L-10 10" /></svg></button>
      </div>
      <nav class="ghmenu"><a v-for="m in ghMenus" :key="m" href="#">{{ m }}</a></nav>
      <div class="ghtabs"><span v-for="(g, i) in ghTabs" :key="i" :class="{ on: i === 0 }"><svg viewBox="-20 -20 40 40" v-html="g" /></span></div>
      <div class="ribbon">
        <div class="grp geo">
          <div class="geocols">
            <div v-for="(col, i) in geoCols" :key="i" class="gcol">
              <div v-for="(row, j) in col" :key="j" class="hexrow"><svg v-for="h in row" :key="h" viewBox="-28 -28 56 56" v-html="H[h]" /></div>
            </div>
          </div>
          <div class="gname">Geometry</div>
        </div>
        <div v-for="(g, i) in ghGroups" :key="i" class="grp" :style="{ width: g.w + 'px' }"><svg v-for="(s, j) in g.icons" :key="j" viewBox="-28 -28 56 56" v-html="s" /></div>
      </div>
      <div class="ghtool">
        <svg viewBox="0 0 44 46"><path fill="#f2f2f2" stroke="#555" stroke-width="2" d="M6 22V2H22L26 6H36V22Z" /><path fill="#86c94f" stroke="#3a7a1c" stroke-width="2" d="M2 44V20H16L22 14H40V44Z" /></svg>
        <svg viewBox="0 0 44 46"><path fill="#2468d8" stroke="#0c2a80" stroke-width="2" d="M1 1H43V40L38 45H1Z" /><path fill="#eee" d="M8 2H36V20H8Z" /><path stroke="#aaa" stroke-width="2" d="M12 8H32M12 14H32" /><path fill="#999" stroke="#0c2a80" stroke-width="2" d="M10 28H30V44H10Z" /><path fill="#1d50c0" d="M14 32H20V40H14Z" /></svg>
        <i class="sep" />
        <select aria-label="Zoom"><option>85%</option></select>
      </div>
      <div class="canvas">
        <svg class="grid" width="100%" height="100%">
          <defs>
            <pattern id="hatch" width="8" height="8" patternUnits="userSpaceOnUse"><path stroke="#c3bfb5" stroke-width="2" d="M-2 10L10-2M-2 2L2-2M6 10L10 6" /></pattern>
            <linearGradient id="fade" x1="0" y1="0" x2="0" y2="1"><stop offset="0.6" stop-color="#555" stop-opacity="0" /><stop offset="1" stop-color="#444" stop-opacity="0.5" /></linearGradient>
          </defs>
          <rect width="100%" height="138" fill="url(#hatch)" />
          <rect width="100%" height="138" fill="url(#fade)" />
          <line v-for="n in 15" :key="'h' + n" x1="0" x2="100%" :y1="n * 85 - 33" :y2="n * 85 - 33" />
          <line v-for="n in 4" :key="'v' + n" y1="0" y2="100%" :x1="n * 255 - 51" :x2="n * 255 - 51" />
          <path stroke="#111" stroke-width="2" d="M0 138H1100" />
          <path fill="none" stroke="#9db87c" stroke-width="5" d="M0 260C100 260 190 310 261 361" />
          <g fill="none" stroke="#aaa69d" stroke-width="2">
            <path d="M0 260C100 262 115 300 115 320C115 370 60 440 0 478" />
            <path d="M0 260C100 262 133 310 133 346C133 420 70 540 0 606" />
          </g>
          <path stroke="#8fcb52" stroke-width="5" d="M0 455H400" />
        </svg>
        <div class="node">
          <i class="grip" /><span class="in">Model</span>
          <svg viewBox="0 0 50 50"><rect x="2" y="2" width="46" height="46" rx="6" fill="#8cbcc0" stroke="#2c4a4c" stroke-width="2" /><path d="M8 40V24H14V30H20V34H28V20H32V14H38V10H42V40Z" /></svg>
          <ul><li v-for="m in metrics" :key="m">{{ m }}</li></ul>
        </div>
        <i class="nub" />
        <i class="compass" />
      </div>
      <div class="ghstatus">
        <svg viewBox="0 0 34 34"><circle cx="17" cy="17" r="16" fill="#1c3fa4" /><circle cx="17" cy="17" r="11" fill="#4fb4d8" /><rect x="14" y="5" width="6" height="14" rx="3" fill="#fff" stroke="#12246c" stroke-width="2" /><circle cx="17" cy="25" r="3" fill="#fff" stroke="#12246c" stroke-width="2" /></svg>
        <span class="grow">Autosave complete (27 seconds ago)</span>
        <span class="ver">1.0.0007</span>
        <svg class="dots" viewBox="0 0 24 24"><path fill="#aaa" d="M18 2H21V5H18ZM18 10H21V13H18ZM18 18H21V21H18ZM10 10H13V13H10ZM10 18H13V21H10ZM2 18H5V21H2Z" /></svg>
      </div>
    </section>

    <section class="dse">
      <div class="dtitle">
        <span class="grow">Structural design space exploration (DSE) through rules and interactive genetic algorithms (IGA)</span>
        <button aria-label="Minimize"><svg viewBox="-24 -24 48 48"><path stroke="#333" stroke-width="4" d="M-9 8H9" /></svg></button>
        <button aria-label="Maximize"><svg viewBox="-24 -24 48 48"><path fill="none" stroke="#333" stroke-width="2" d="M-9-9H9V9H-9Z" /><path stroke="#333" stroke-width="5" d="M-10-7H10" /></svg></button>
        <button aria-label="Close"><svg viewBox="-24 -24 48 48"><path stroke="#333" stroke-width="4" d="M-9-9L9 9M9-9L-9 9" /></svg></button>
      </div>
      <nav class="dtabs"><a v-for="(t, i) in dseTabs" :key="t" href="#" :class="{ on: i === 0 }">{{ t }}</a></nav>
      <div class="dbody">
        <div class="side">
          <h2>Initial Settings</h2>
          <p>Choose the initial population size, crossover and<br>mutation rate. The latter two can be adjusted<br>during evolution.</p>
          <div class="fields">
            <div v-for="s in sliders" :key="s.id" class="field">
              <label :for="s.id">{{ s.label }}</label>
              <div class="sl"><input :id="s.id" v-model="s.value" type="range" min="0" :max="s.max" :step="s.max / 432" :style="{ '--p': s.value / s.max }"><output>{{ s.value }}</output></div>
            </div>
          </div>
          <div class="btns">
            <div><button aria-describedby="rnd">RESTART</button><span id="rnd">Random</span></div>
            <div><button class="cur" aria-describedby="cur">RESTART</button><span id="cur">Current</span></div>
          </div>
          <h2>K-means Clusters</h2>
          <p>Designs are clustered into 12 groups based on<br>parameter similarity. Click on the 'design' tab to<br>see representative closest to each group centroid.</p>
          <div class="checks"><label v-for="c in checks" :key="c.id"><span>{{ c.label }}</span><input v-model="c.on" type="checkbox"></label></div>
          <div class="field">
            <label :for="brightness.id">{{ brightness.label }}</label>
            <div class="sl"><input :id="brightness.id" v-model="brightness.value" type="range" min="0" max="1" step="0.01" :style="{ '--p': brightness.value }"><output>{{ brightness.value }}</output></div>
          </div>
        </div>
        <div class="cells">
          <div v-for="(d, i) in designs" :key="i" class="cell">
            <span>{{ i }}</span>
            <svg viewBox="-226 -200 452 396">
              <line v-for="(p, j) in d" :key="j" x1="0" y1="0" :x2="p[0]" :y2="p[1]" />
              <circle r="8" /><circle v-for="(p, j) in d" :key="'c' + j" :cx="p[0]" :cy="p[1]" r="8" />
            </svg>
          </div>
        </div>
      </div>
    </section>
  </div>
</template>

<style>
body { background: #d9d9db; }
#app { min-height: 100vh; }
</style>

<style scoped>
* { box-sizing: border-box; margin: 0; padding: 0; }
a { color: inherit; text-decoration: none; white-space: nowrap; }
button { border: 0; background: none; font: inherit; color: inherit; }
svg { display: block; flex: none; width: 48px; height: 48px; overflow: visible; }
.defs { position: absolute; width: 0; height: 0; }
.grow { flex: 1; }
.desktop {
  position: relative; min-height: 100vh; overflow: hidden; display: flex; flex-direction: column;
  font: 22px/32px "Noto Sans", "Open Sans", sans-serif; color: #3c3c3c;
  background: linear-gradient(#cd4465 0 96px, #c9cacc 96px 180px, #dadadc 180px 2012px, #1b3557 2012px);
}

.macbar { display: flex; height: 48px; align-items: center; padding: 0 39px; color: #f2f4f8; font: 25px/48px Inter, sans-serif; white-space: nowrap; background: linear-gradient(90deg, #875c88 0, #7a6a9a 400px, #5a78aa 1200px, #3c78ae 1700px, #2560a0 100%); text-shadow: 0 2px 4px rgba(0, 0, 0, .3); }
.apple { width: 28px; height: 34px; margin-right: 40px; }
.macmenu { display: flex; gap: 43px; flex: 1; }
.macmenu b { font-size: 26px; }
.tray { display: flex; align-items: center; font-size: 27px; }
.slots { display: flex; }
.s73 svg { width: 73px; }
.s75 svg { width: 75px; }
.s66 svg { width: 66px; }
.meter { display: flex; align-items: center; gap: 8px; margin-left: 18px; width: 199px; }
.meter + .meter { margin-left: 16px; width: 148px; gap: 12px; }
.ram { width: 44px; height: 28px; }
.therm { width: 30px; height: 34px; }
time { margin-left: 14px; width: 222px; text-align: right; }

.vm { flex: 1; display: flex; flex-direction: column; margin: 2px 0 0 15px; border-radius: 20px 20px 0 0; background: #e9eaef; border-bottom: 4px solid #1a1718; box-shadow: 0 0 12px rgba(0, 0, 0, .4); overflow: hidden; }
.vmbar { display: flex; align-items: center; height: 77px; padding: 0 11px 0 25px; background: #f5f1f3; border-bottom: 1px solid #cfcccf; font: 31px/40px Inter, sans-serif; color: #3f3c3e; }
.vmbar h1 { flex: 1; font: inherit; text-align: center; padding: 4px 0 0 644px; }
.lights { display: flex; gap: 16px; }
.lights i { width: 24px; height: 24px; border-radius: 50%; }
.r { background: #ed6a5e; } .y { background: #f4be4f; } .g { background: #61c554; } .b { background: #68b5f0; }
.vmtools { display: flex; }
.vmtools svg { width: 64px; }
.vmtools .tight { width: 48px; }
.rtitle { display: flex; align-items: center; height: 41px; background: #fff; color: #999; padding: 0 5px 0 3px; font-size: 23px; }
.rlogo { width: 32px; height: 32px; margin-right: 11px; }
.rtitle button { width: 91px; display: flex; justify-content: center; }
.rmenu { display: flex; gap: 29px; height: 40px; padding-left: 13px; background: #fff; color: #6d6d6d; line-height: 46px; }
.cmd { display: flex; margin: 10px 3px 0 13px; height: 64px; background: #fff; color: #333; }
.cmdtext { flex: 1; }
.hist { height: 28px; line-height: 26px; border-bottom: 2px solid #c8cede; }
.prompt { display: flex; height: 36px; line-height: 30px; color: #111; }
.prompt input { flex: 1; border: 0; font: inherit; outline: 0; }
.cmdscroll { width: 30px; background: #eee; text-align: center; }
.cmdscroll .mini { height: 28px; font-size: 12px; line-height: 24px; border-bottom: 2px solid #c8cede; }
.cmdscroll button { display: block; width: 28px; height: 18px; line-height: 14px; font-size: 12px; border: 2px solid #aaa; color: #111; background: #f4f4f4; }
.rtabs { display: flex; height: 44px; margin: 6px 3px 0 3px; border-top: 2px solid #d9dce7; border-bottom: 2px solid #c5cbdd; line-height: 48px; color: #4a4646; }
.std { width: 144px; margin-left: 10px; padding-left: 20px; border-top: 2px solid #c5cbdd; border-radius: 12px 0 0 0; border-left: 1px solid #c5cbdd; margin-top: 6px; line-height: 34px; }
.tooltabs { display: flex; gap: 39px; flex: 1; padding-left: 980px; font-size: 23px; }
.cog { width: 44px; height: 44px; margin-right: -7px; }
.rtools { display: flex; position: relative; height: 194px; padding-top: 2px; border-left: 2px solid #d4d9e6; margin-left: 4px; }
.tb { display: flex; }
.tb.left { width: 1184px; padding: 2px 0 0 8px; gap: 10px; }
.cor, .tb span { display: flex; position: relative; width: 56px; height: 56px; align-items: center; justify-content: center; }
.cor::after { content: ""; position: absolute; right: 1px; bottom: 2px; border: 6px solid; border-color: transparent #777 #777 transparent; }

.work { flex: 1; display: flex; min-height: 0; }
.mid { flex: 1; min-width: 0; display: flex; flex-direction: column; }
.upper { flex: 1; display: flex; min-height: 0; }
.palette { width: 376px; padding-top: 7px; }
.pgrid { display: grid; grid-template-columns: 56px 56px 56px; grid-auto-rows: 56px; justify-content: start; border-top: 1px solid #c5cbdd; padding-top: 8px; }
.pgrid span { display: flex; align-items: center; justify-content: center; }
.viewport { flex: 1; min-width: 0; background: #9ea3aa; border: 1px solid #b3bdd2; overflow: hidden; }
.viewport .grid, .canvas .grid { width: 100%; height: 100%; }
.viewport line { stroke: #92979c; stroke-width: 2; }
.viewport .m { stroke: #808488; }
.viewport .axis { stroke: #974b4d; stroke-width: 3; }
.legs { fill: #9ea3aa; stroke: #222; stroke-width: 3; }
.legs path { stroke: #69ba41; stroke-width: 8; }
.viewport text { font: 43px "Noto Sans", sans-serif; fill: #931f18; }
.props { width: 103px; padding: 0 0 9px 15px; overflow: hidden; white-space: nowrap; color: #3c3340; }
.props h2 { font: 22px/42px "Noto Sans", sans-serif; padding-left: 7px; }
.pi { display: grid; grid-template-columns: 28px 28px; grid-auto-rows: 45px; gap: 0 2px; padding-left: 8px; align-items: center; }
.pi svg { width: 28px; height: 28px; }
.ptabs { display: flex; position: relative; height: 44px; margin-top: -2px; }
.ptabs span { display: flex; align-items: center; padding-left: 9px; width: 32px; border: 2px solid #c5cbdd; border-right: 0; border-bottom: 0; }
.ptabs span + span { flex: 1; border: 0; border-left: 2px solid #c5cbdd; border-bottom: 2px solid #c5cbdd; padding-left: 8px; }
.ptabs svg { width: 28px; height: 28px; z-index: 1; }
.ptabs .pcog { position: absolute; right: 2px; top: 12px; }
.pbody { border-left: 2px solid #c5cbdd; border-bottom: 2px solid #c5cbdd; padding: 9px 0 0 12px; }
.cam { display: flex; width: 56px; height: 56px; background: #aebbe8; align-items: center; justify-content: center; }
.cam svg { width: 42px; height: 42px; }
.frame { display: block; margin: 14px 0 21px 4px; }
.frame svg { width: 48px; height: 44px; }
.sec { padding-left: 5px; }
.sec h3 { font: 26px/54px "Noto Sans", sans-serif; height: 52px; border-bottom: 1px solid #dadde8; }
.sec p { height: 42px; line-height: 44px; margin-left: 29px; padding-left: 9px; border-bottom: 1px solid #dadde8; }
.sec .dim { color: #8a8590; }
.hscroll { display: flex; justify-content: space-between; align-items: center; height: 34px; margin: 74px 0 0 -12px; padding: 0 14px 0 10px; background: #f0f0f0; color: #999; }
.hscroll i { width: 16px; height: 34px; background: #cdcdcd; }

.vtabs { display: flex; height: 48px; padding-left: 376px; line-height: 46px; gap: 31px; color: #454545; }
.vtabs .on { width: 66px; height: 40px; text-align: center; border: 2px solid #c5cbdd; border-top: 0; border-radius: 0 0 8px 12px; margin-right: -8px; }
.vtabs svg { width: 20px; height: 20px; margin-top: 14px; }
.snaps { display: flex; gap: 14px; height: 88px; padding: 10px 0 0 14px; border-left: 3px double #c5cbdd; color: #454545; }
.snaps label { display: flex; gap: 7px; height: 34px; align-items: center; }
.snaps input { appearance: none; width: 26px; height: 26px; border: 2px solid #444; background: #fff; }
.snaps input:checked { background: #fff url("data:image/svg+xml,%3Csvg xmlns='http://www.w3.org/2000/svg' viewBox='0 0 22 22'%3E%3Cpath fill='none' stroke='%23333' stroke-width='2' d='M3 11L8 17L19 4'/%3E%3C/svg%3E"); }
.snaps .off input { width: 24px; height: 24px; border-color: #b4b4b4; background: #ddd; }
.snaps .off { margin-left: 4px; margin-right: 12px; }
.status { display: flex; height: 38px; border-top: 2px solid #c5cbdd; line-height: 40px; text-align: center; white-space: nowrap; }
.status span { border-right: 2px solid #c5cbdd; }
.status .layer { width: 335px; display: flex; gap: 7px; padding: 0 8px; }
.layer i { width: 26px; height: 30px; margin-top: 6px; background: #000; }
.status .act { background: #d0d6ec; font-weight: 600; border-color: #e9eaef; }
.status .tol { border: 0; padding-left: 4px; }

.gh { position: absolute; left: 168px; top: 200px; width: 1065px; height: 1710px; display: flex; flex-direction: column; background: #f0f0f0; border: 2px solid #929292; box-shadow: 0 10px 40px rgba(0, 0, 0, .4); color: #111; }
.ghtitle { display: flex; align-items: center; height: 56px; background: #fff; color: #999; padding-left: 14px; }
.ghtitle button { width: 92px; display: flex; justify-content: center; }
.ghmenu { display: flex; gap: 39px; height: 56px; padding-left: 25px; line-height: 58px; background: #f6f6f6; }
.ghtabs { display: flex; height: 44px; border-bottom: 2px solid #888; }
.ghtabs span { width: 56px; height: 44px; display: flex; align-items: center; justify-content: center; }
.ghtabs .on { background: #fff; border: 2px solid #999; border-bottom: 0; border-radius: 10px 10px 0 0; height: 46px; }
.ghtabs svg { width: 40px; height: 40px; }
.ribbon { display: flex; gap: 9px; height: 210px; padding: 6px 6px 0 3px; background: linear-gradient(#d2d2d2, #f0f0f0); overflow: hidden; }
.grp { display: flex; justify-content: space-around; border: 2px solid #999; border-radius: 8px; background: linear-gradient(#d4d4d4, #efefef); height: 204px; }
.grp svg { width: 56px; height: 56px; }
.geo { width: 273px; flex-direction: column; justify-content: space-between; overflow: hidden; }
.geocols { display: flex; }
.gcol { flex: 67; border-right: 2px solid #bbb; }
.gcol:nth-child(2) { flex: 132; }
.gcol:last-child { flex: 72; border: 0; }
.hexrow { display: flex; justify-content: center; height: 56px; }
.gname { height: 28px; background: #1c1c1c; color: #fff; text-align: center; font-size: 20px; line-height: 26px; padding-right: 26px; }
.ghtool { display: flex; align-items: center; gap: 16px; height: 66px; margin-top: 20px; padding-left: 9px; background: #fafafa; border-top: 3px solid #888; }
.ghtool svg { width: 44px; height: 46px; }
.ghtool .sep { width: 2px; height: 44px; background: #bbb; }
.ghtool select { appearance: none; width: 200px; height: 46px; margin-left: -8px; padding-left: 4px; border: 2px solid #777; background: #fff; font: 22px "Noto Sans", sans-serif; color: #222; }
.canvas { flex: 1; position: relative; min-height: 0; overflow: hidden; background: #d4d0c8; border-left: 2px solid #777; }
.canvas line { stroke: #bcb8af; stroke-width: 2; }
.node { position: absolute; left: 26px; top: 745px; width: 500px; display: flex; align-items: center; padding: 0 0 0 10px; border: 3px solid #222; border-radius: 6px; background: linear-gradient(#dff0f0 0, #c4e0e2 14px, #9ac8cc 15px, #7da8ac); font-size: 18px; color: #16282a; }
.node svg { width: 50px; height: 50px; }
.node ul { list-style: none; padding: 3px 0 3px 5px; }
.node li { height: 34px; line-height: 34px; white-space: nowrap; }
.in { width: 54px; }
.grip { position: absolute; left: -10px; top: 183px; width: 9px; height: 16px; border: 3px solid #111; border-right: 0; border-radius: 8px 0 0 8px; background: #fff; }
.nub { position: absolute; left: 0; bottom: 2px; width: 14px; height: 56px; border: 3px solid #111; border-left: 0; background: linear-gradient(#ccc 30%, #888 40%); }
.compass { position: absolute; right: 33px; bottom: 18px; width: 60px; height: 60px; border-radius: 50%; border: 3px solid #555; background: #eee; }
.ghstatus { display: flex; align-items: center; gap: 5px; height: 44px; padding: 0 3px 0 5px; border-top: 3px solid #fff; }
.ghstatus svg { width: 34px; height: 34px; }
.ghstatus .grow { font-size: 23px; }
.ghstatus .ver { color: #888; padding-right: 30px; }
.ghstatus .dots { width: 24px; height: 24px; margin-top: 14px; }

.dse { position: absolute; left: 433px; top: 394px; width: 2509px; height: 1438px; display: flex; flex-direction: column; background: #c5c9ce; color: #000; font-family: "Open Sans", "Noto Sans", sans-serif; }
.dtitle { display: flex; align-items: center; height: 60px; padding-left: 56px; background: #808080; color: #fff; font-size: 29px; line-height: 60px; }
.dtitle button { width: 67px; display: flex; justify-content: center; }
.dtabs { display: flex; gap: 34px; height: 92px; padding-left: 53px; font-size: 49px; font-weight: 300; line-height: 93px; }
.dtabs .on { color: #fff; }
.dbody { flex: 1; display: flex; min-height: 0; }
.side { width: 613px; padding: 26px 58px 0 45px; font-size: 22px; line-height: 32px; font-weight: 300; }
.side h2 { font-size: 38px; font-weight: 400; line-height: 50px; padding-left: 10px; }
.side p { margin-top: 22px; padding-left: 10px; white-space: nowrap; }
.fields { margin-top: 39px; }
.field { margin-bottom: 26px; }
.field label { display: block; padding-left: 10px; }
.sl { display: flex; gap: 10px; height: 46px; }
.sl output { padding-top: 19px; }
.sl input { appearance: none; flex: 1; min-width: 0; height: 46px; background: linear-gradient(90deg, #fff calc((100% - 16px) * var(--p)), transparent 0) center / 100% 8px no-repeat, linear-gradient(#9c9d9e, #9c9d9e) center / 100% 6px no-repeat; }
.sl input::-webkit-slider-thumb { appearance: none; width: 16px; height: 32px; border-radius: 4px; background: #7d7d7d; }
.btns { display: flex; gap: 8px; margin: 55px 0 60px; }
.btns div { width: 250px; text-align: center; }
.btns button { display: block; width: 100%; height: 50px; margin-bottom: 12px; border: 2px solid #6a6d70; border-radius: 5px; font-size: 18px; font-weight: 400; }
.btns .cur { border: 4px solid #000; border-radius: 7px; background: #e1e1e1; }
.checks { display: flex; flex-direction: column; gap: 16px; margin: 55px 2px 40px 10px; }
.checks label { display: flex; justify-content: space-between; align-items: center; height: 36px; }
.checks input { appearance: none; width: 36px; height: 36px; border: 2px solid #55585b; }
.checks input:checked { background: url("data:image/svg+xml,%3Csvg xmlns='http://www.w3.org/2000/svg' viewBox='0 0 32 32'%3E%3Cpath fill='none' stroke='%23fff' stroke-width='5' d='M5 16L13 24L27 9'/%3E%3C/svg%3E"); }
.cells { flex: 1; display: grid; grid-template: repeat(3, 1fr) / repeat(4, 1fr); gap: 16px; padding: 20px 24px 24px 0; }
.cell { display: grid; border: 2px solid #6a6e72; min-height: 0; }
.cell > * { grid-area: 1 / 1; }
.cell span { font-size: 24px; padding: 15px 0 0 19px; }
.cell svg { width: 100%; height: 100%; }
.cell line { stroke: #4a6160; stroke-width: 2; }
.cell circle { fill: #374f50; }
</style>
